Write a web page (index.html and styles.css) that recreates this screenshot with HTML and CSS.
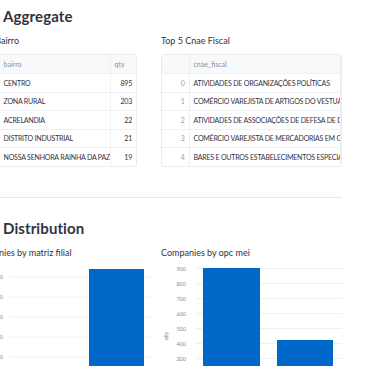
FILE: index.html
```html
<!DOCTYPE html>
<html lang="en">

<head>
  <meta charset="UTF-8">
  <meta name="viewport" content="width=device-width, initial-scale=1.0">
  <title>Companies</title>
  <link rel="stylesheet" href="styles.css">
</head>

<body>
  <div class="page">
    <h2 class="section-title">Aggregate</h2>
    <div class="cols">
      <div class="col">
        <p class="caption">Top 5 Bairro</p>
        <div class="grid-table narrow">
          <table>
            <thead>
              <tr><th class="idx"></th><th>bairro</th><th class="num">qty</th></tr>
            </thead>
            <tbody>
              <tr><td class="idx">0</td><td>CENTRO</td><td class="num">895</td></tr>
              <tr><td class="idx">1</td><td>ZONA RURAL</td><td class="num">203</td></tr>
              <tr><td class="idx">2</td><td>ACRELANDIA</td><td class="num">22</td></tr>
              <tr><td class="idx">3</td><td>DISTRITO INDUSTRIAL</td><td class="num">21</td></tr>
              <tr><td class="idx">4</td><td>NOSSA SENHORA RAINHA DA PAZ</td><td class="num">19</td></tr>
            </tbody>
          </table>
        </div>
      </div>
      <div class="col">
        <p class="caption">Top 5 Cnae Fiscal</p>
        <div class="grid-table">
          <table>
            <thead>
              <tr><th class="idx"></th><th>cnae_fiscal</th></tr>
            </thead>
            <tbody>
              <tr><td class="idx">0</td><td>ATIVIDADES DE ORGANIZAÇÕES POLÍTICAS</td></tr>
              <tr><td class="idx">1</td><td>COMÉRCIO VAREJISTA DE ARTIGOS DO VESTUÁRIO E ACESSÓRIOS</td></tr>
              <tr><td class="idx">2</td><td>ATIVIDADES DE ASSOCIAÇÕES DE DEFESA DE DIREITOS SOCIAIS</td></tr>
              <tr><td class="idx">3</td><td>COMÉRCIO VAREJISTA DE MERCADORIAS EM GERAL</td></tr>
              <tr><td class="idx">4</td><td>BARES E OUTROS ESTABELECIMENTOS ESPECIALIZADOS</td></tr>
            </tbody>
          </table>
        </div>
      </div>
    </div>

    <hr class="divider">

    <h2 class="section-title">Distribution</h2>
    <div class="cols">
      <div class="col">
        <p class="caption">Companies by matriz filial</p>
        <svg class="chart" width="185" height="110" viewBox="0 0 185 110">
          <g class="grid">
            <line x1="39" y1="17" x2="182" y2="17" />
            <line x1="39" y1="37" x2="182" y2="37" />
            <line x1="39" y1="57" x2="182" y2="57" />
            <line x1="39" y1="77" x2="182" y2="77" />
            <line x1="39" y1="97" x2="182" y2="97" />
          </g>
          <g class="ticks">
            <text x="32" y="19">1,000</text>
            <text x="32" y="39">800</text>
            <text x="32" y="59">600</text>
            <text x="32" y="79">400</text>
            <text x="32" y="99">200</text>
          </g>
          <rect class="bar" x="118" y="9" width="55" height="110" />
        </svg>
      </div>
      <div class="col">
        <p class="caption">Companies by opc mei</p>
        <svg class="chart" width="181" height="110" viewBox="0 0 181 110">
          <g class="grid">
            <line x1="35" y1="8.5" x2="181" y2="8.5" />
            <line x1="35" y1="23.5" x2="181" y2="23.5" />
            <line x1="35" y1="38.5" x2="181" y2="38.5" />
            <line x1="35" y1="53.5" x2="181" y2="53.5" />
            <line x1="35" y1="68.5" x2="181" y2="68.5" />
            <line x1="35" y1="83.5" x2="181" y2="83.5" />
            <line x1="35" y1="98.5" x2="181" y2="98.5" />
          </g>
          <g class="ticks">
            <text x="25" y="10.5">900</text>
            <text x="25" y="25.5">800</text>
            <text x="25" y="40.5">700</text>
            <text x="25" y="55.5">600</text>
            <text x="25" y="70.5">500</text>
            <text x="25" y="85.5">400</text>
            <text x="25" y="100.5">300</text>
          </g>
          <text class="axis-title" transform="translate(7 76) rotate(-90)">qty</text>
          <rect class="bar" x="42" y="8" width="57" height="110" />
          <rect class="bar" x="116" y="80" width="56" height="40" />
        </svg>
      </div>
    </div>
  </div>
</body>

</html>
```

FILE: styles.css
```css
* {
  margin: 0;
  padding: 0;
  box-sizing: border-box;
}

body {
  background: #fff;
  color: #31333f;
  font-family: Lato, "Noto Sans", sans-serif;
  overflow: hidden;
}

.page {
  width: 371px;
  margin-left: -29px;
  padding-top: 6px;
}

.section-title {
  font-size: 15px;
  line-height: 20px;
  font-weight: 700;
  padding-left: 32px;
  letter-spacing: 0.1px;
}

.cols {
  display: grid;
  grid-template-columns: 185px 181px;
  column-gap: 5px;
}

.caption {
  font-size: 9px;
  line-height: 12px;
  margin-top: 9px;
  margin-bottom: 7px;
}

/* dataframe */
.grid-table {
  border: 1px solid #e9ebf0;
  border-radius: 3px;
  overflow: hidden;
  width: 100%;
}

.grid-table.narrow {
  width: 166px;
}

.grid-table table {
  border-collapse: collapse;
  font-size: 7px;
  white-space: nowrap;
  table-layout: fixed;
  width: 100%;
}

.grid-table th,
.grid-table td {
  height: 18.5px;
  padding: 0 4px 0 4px;
  text-align: left;
  border-bottom: 1px solid #eef0f4;
  border-right: 1px solid #eef0f4;
  overflow: hidden;
}

.grid-table td {
  letter-spacing: -0.2px;
}

.grid-table tbody tr:last-child td {
  border-bottom: none;
}

.grid-table th {
  background: #f8f9fb;
  color: #8d8f99;
  font-weight: 400;
}

.grid-table .idx {
  width: 27px;
  text-align: right;
  color: #9a9ca5;
}

.grid-table.narrow th:nth-child(2),
.grid-table.narrow td:nth-child(2) {
  width: 111px;
}

.grid-table .num {
  text-align: right;
  border-right: none;
}

.grid-table th.num {
  text-align: left;
}

/* divider */
.divider {
  border: none;
  border-top: 1px solid #e6e7eb;
  margin: 30px 0 20px 29px;
  width: 342px;
}

/* charts */
.chart {
  display: block;
  margin-top: -6px;
}

.chart .grid line {
  stroke: #eef0f3;
  stroke-width: 1;
}

.chart .ticks text {
  font-size: 5.5px;
  fill: #8a8c94;
  text-anchor: end;
}

.chart .axis-title {
  font-size: 6px;
  fill: #8a8c94;
  text-anchor: middle;
}

.chart .bar {
  fill: #0068c9;
}
```
